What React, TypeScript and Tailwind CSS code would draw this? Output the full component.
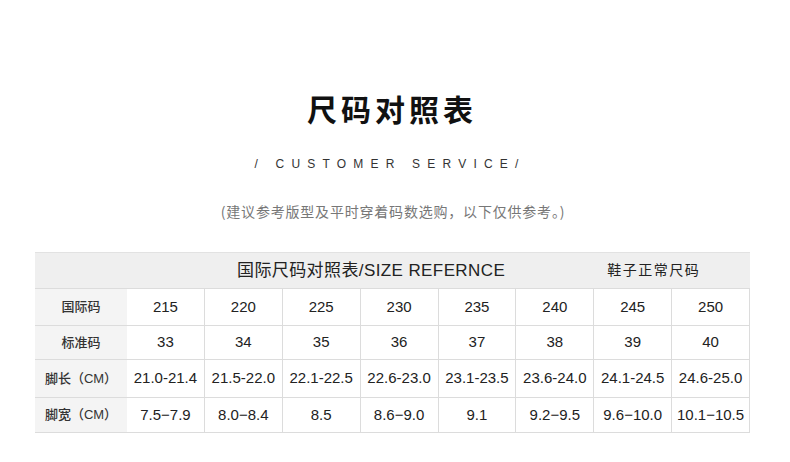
const sizes = ['215', '220', '225', '230', '235', '240', '245', '250'];
const std = ['33', '34', '35', '36', '37', '38', '39', '40'];
const lengths = ['21.0-21.4', '21.5-22.0', '22.1-22.5', '22.6-23.0', '23.1-23.5', '23.6-24.0', '24.1-24.5', '24.6-25.0'];
const widths = ['7.5−7.9', '8.0−8.4', '8.5', '8.6−9.0', '9.1', '9.2−9.5', '9.6−10.0', '10.1−10.5'];

const rows = [
  { label: '国际码', values: sizes, h: 'h-[37px]' },
  { label: '标准码', values: std, h: 'h-[34px]' },
  { label: '脚长（CM）', values: lengths, h: 'h-[38px]' },
  { label: '脚宽（CM）', values: widths, h: 'h-[35px]' },
];

const font = "font-['Liberation_Sans','Noto_Sans_CJK_SC',sans-serif]";

export default function App() {
  return (
    <div className={`w-[790px] h-[462px] bg-white flex flex-col items-center ${font}`}>
      <h1 className="mt-[88px] ml-[-6px] text-[30px] leading-[40px] font-bold tracking-[4px] text-[#111] font-['Noto_Sans_CJK_SC',sans-serif]">
        尺码对照表
      </h1>
      <div className="mt-[28px] ml-[-10px] text-[12px] leading-[16px] tracking-[0.6em] text-[#333]">
        / CUSTOMER SERVICE/
      </div>
      <div className="mt-[29px] ml-[-4px] text-[14px] leading-[20px] tracking-[0.8px] text-[#777] font-['Noto_Sans_CJK_SC',sans-serif]">
        (建议参考版型及平时穿着码数选购，以下仅供参考。)
      </div>

      <div className="mt-[31px] self-start ml-[35px] w-[715px] text-[#222]">
        <div className="h-[36px] flex items-center bg-[#efefef] border-t border-[#e2e2e2]">
          <span className="ml-[202px] text-[17px] tracking-[0.4px]">国际尺码对照表/SIZE REFERNCE</span>
          <span className="ml-[102px] text-[14px] tracking-[1.5px]">鞋子正常尺码</span>
        </div>
        {rows.map((r) => (
          <div key={r.label} className={`grid grid-cols-[92px_repeat(8,1fr)] border-t border-[#dcdcdc] ${r.h}`}>
            <div className="flex items-center justify-center bg-[#f4f4f4] text-[13px] font-medium text-[#333]">
              {r.label}
            </div>
            {r.values.map((v, i) => (
              <div key={i} className="flex items-center justify-center text-[15px] border-r border-[#dcdcdc]">
                {v}
              </div>
            ))}
          </div>
        ))}
        <div className="border-t border-[#dcdcdc]" />
      </div>
    </div>
  );
}
